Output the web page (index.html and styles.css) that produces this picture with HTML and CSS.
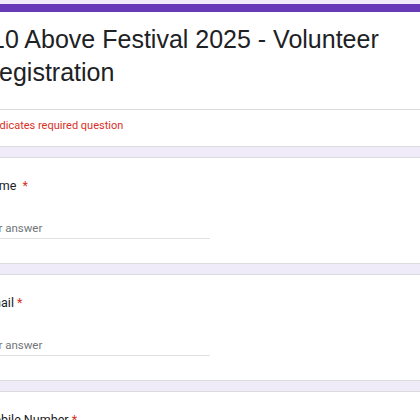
FILE: index.html
```html
<!DOCTYPE html>
<html lang="en">
<head>
<meta charset="utf-8">
<title>10 Above Festival 2025 - Volunteer Registration</title>
<link rel="stylesheet" href="styles.css">
</head>
<body>
<div class="page">
  <div class="card header">
    <div class="title-wrap">
      <div class="title">10 Above Festival 2025 - Volunteer Registration</div>
    </div>
    <div class="required">* Indicates required question</div>
  </div>
  <div class="card question">
    <div class="label">Name&nbsp; <span class="req">*</span></div>
    <div class="input">Your answer</div>
  </div>
  <div class="card question">
    <div class="label">Email <span class="req">*</span></div>
    <div class="input">Your answer</div>
  </div>
  <div class="card question">
    <div class="label">Mobile Number <span class="req">*</span></div>
    <div class="input">Your answer</div>
  </div>
</div>
</body>
</html>
```

FILE: styles.css
```css
html, body {
  margin: 0;
  padding: 0;
  overflow: hidden;
  background: #f0ebf8;
}

.page {
  margin-left: -44px;
  width: 720px;
  padding-top: 4px;
  display: flex;
  flex-direction: column;
  gap: 10px;
}

.card {
  background: #fff;
  border: 1px solid #dadce0;
  border-radius: 8px;
}

.header {
  border-top: 8px solid #673ab7;
}

.title-wrap {
  padding: 11px 24px 20px;
}

.title {
  width: 420px;
  font-family: "Liberation Sans", Arial, sans-serif;
  font-size: 25px;
  line-height: 33px;
  color: #202124;
  text-indent: 10px;
}

.required {
  border-top: 1px solid #dadce0;
  padding: 8px 24px 12px 26px;
  font-family: Roboto, "Noto Sans", sans-serif;
  font-size: 11px;
  line-height: 16px;
  color: #d93025;
}

.question {
  padding: 18px 24px 24px 26px;
}

.label {
  font-family: Roboto, "Noto Sans", sans-serif;
  font-size: 12.5px;
  line-height: 20px;
  color: #202124;
}

.req {
  color: #d93025;
}

.input {
  margin-top: 24px;
  margin-left: -4px;
  width: 231px;
  padding-bottom: 2px;
  border-bottom: 1px solid #e0e0e0;
  font-family: Roboto, "Noto Sans", sans-serif;
  font-size: 11.5px;
  line-height: 16px;
  color: #70757a;
}
```
